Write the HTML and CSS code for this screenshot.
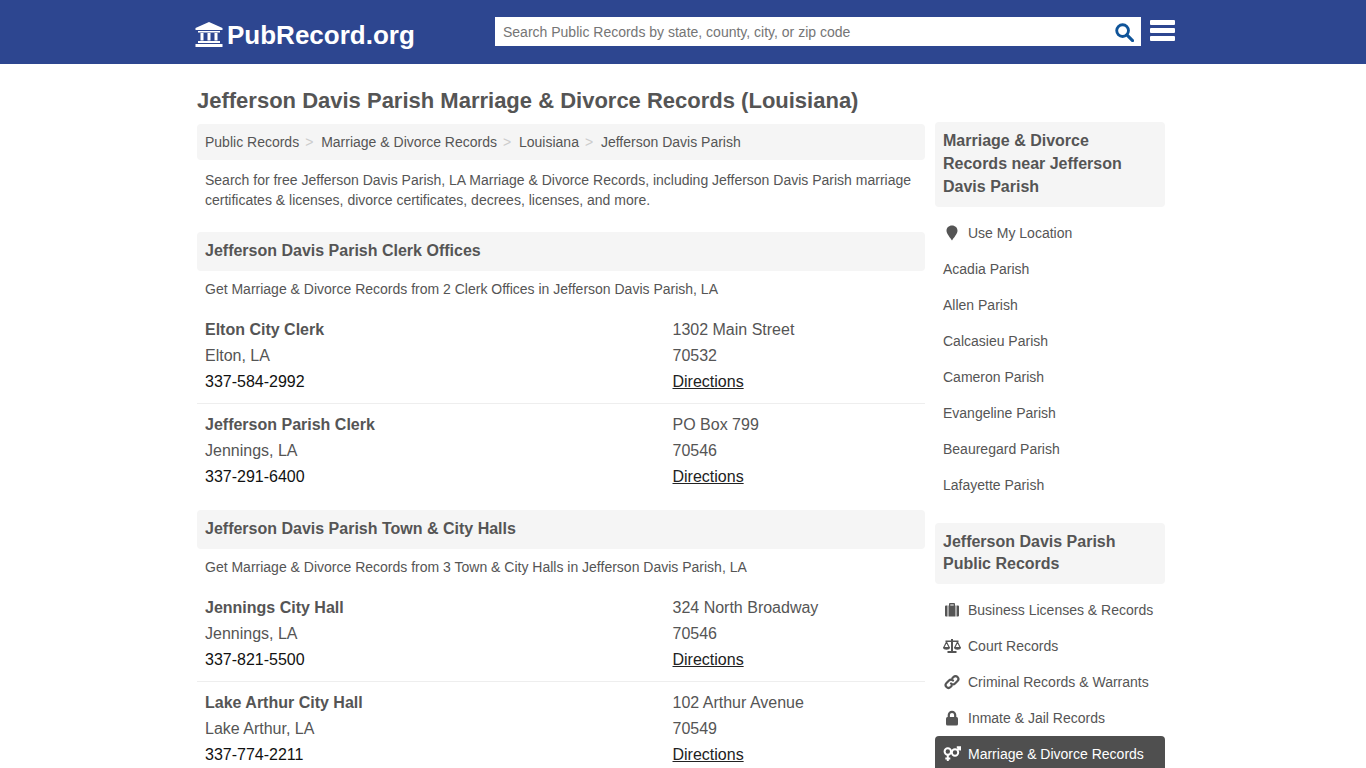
FILE: index.html
```html
<!DOCTYPE html>
<html lang="en">
<head>
<meta charset="utf-8">
<title>Jefferson Davis Parish Marriage &amp; Divorce Records (Louisiana)</title>
<link rel="stylesheet" href="styles.css">
</head>
<body>
<header class="topbar">
  <div class="topbar-inner">
    <a class="logo" href="#">
      <svg class="logo-icon" viewBox="0 0 28 25"><path d="M14 0 L27.500 6 V8 H0.500 V6 Z M3 9 H25 V10.500 H3 Z M5.500 11 H8.500 V18.500 H5.500 Z M12.500 11 H15.500 V18.500 H12.500 Z M19.500 11 H22.500 V18.500 H19.500 Z M3 19 H25 V21 H3 Z M0.500 22 H27.500 V25 H0.500 Z"/></svg>
      <span class="logo-text">PubRecord.org</span>
    </a>
    <form class="search">
      <input class="search-input" type="text" placeholder="Search Public Records by state, county, city, or zip code">
      <svg class="search-icon" viewBox="0 0 20 20"><circle cx="8" cy="8" r="6.200" fill="none" stroke="#0f5499" stroke-width="3"/><path d="M12.500 12.500 L18.500 18.500" stroke="#0f5499" stroke-width="3.200" stroke-linecap="round"/></svg>
    </form>
    <div class="burger"><span></span><span></span><span></span></div>
  </div>
</header>
<div class="page">
  <main class="main">
    <h1 class="title">Jefferson Davis Parish Marriage &amp; Divorce Records (Louisiana)</h1>
    <nav class="crumbs">
      <a href="#">Public Records</a><i>&gt;</i><a href="#">Marriage &amp; Divorce Records</a><i>&gt;</i><a href="#">Louisiana</a><i>&gt;</i><a href="#">Jefferson Davis Parish</a>
    </nav>
    <p class="intro">Search for free Jefferson Davis Parish, LA Marriage &amp; Divorce Records, including Jefferson Davis Parish marriage certificates &amp; licenses, divorce certificates, decrees, licenses, and more.</p>

    <h2 class="section-head">Jefferson Davis Parish Clerk Offices</h2>
    <p class="section-sub">Get Marriage &amp; Divorce Records from 2 Clerk Offices in Jefferson Davis Parish, LA</p>
    <div class="entry">
      <div class="col-l"><b>Elton City Clerk</b><span>Elton, LA</span><span class="phone">337-584-2992</span></div>
      <div class="col-r"><span>1302 Main Street</span><span>70532</span><a href="#">Directions</a></div>
    </div>
    <div class="entry last">
      <div class="col-l"><b>Jefferson Parish Clerk</b><span>Jennings, LA</span><span class="phone">337-291-6400</span></div>
      <div class="col-r"><span>PO Box 799</span><span>70546</span><a href="#">Directions</a></div>
    </div>

    <h2 class="section-head">Jefferson Davis Parish Town &amp; City Halls</h2>
    <p class="section-sub">Get Marriage &amp; Divorce Records from 3 Town &amp; City Halls in Jefferson Davis Parish, LA</p>
    <div class="entry">
      <div class="col-l"><b>Jennings City Hall</b><span>Jennings, LA</span><span class="phone">337-821-5500</span></div>
      <div class="col-r"><span>324 North Broadway</span><span>70546</span><a href="#">Directions</a></div>
    </div>
    <div class="entry">
      <div class="col-l"><b>Lake Arthur City Hall</b><span>Lake Arthur, LA</span><span class="phone">337-774-2211</span></div>
      <div class="col-r"><span>102 Arthur Avenue</span><span>70549</span><a href="#">Directions</a></div>
    </div>
  </main>
  <aside class="side">
    <h3 class="side-head tall">Marriage &amp; Divorce Records near Jefferson Davis Parish</h3>
    <ul class="side-list">
      <li><a href="#"><svg class="ico" viewBox="0 0 18 16"><path d="M9 .5 C5.700 .5 3.500 2.800 3.500 5.800 C3.500 9 7.500 13 9 15.500 C10.500 13 14.500 9 14.500 5.800 C14.500 2.800 12.300 .5 9 .5 Z"/></svg>Use My Location</a></li>
      <li><a href="#">Acadia Parish</a></li>
      <li><a href="#">Allen Parish</a></li>
      <li><a href="#">Calcasieu Parish</a></li>
      <li><a href="#">Cameron Parish</a></li>
      <li><a href="#">Evangeline Parish</a></li>
      <li><a href="#">Beauregard Parish</a></li>
      <li><a href="#">Lafayette Parish</a></li>
    </ul>
    <h3 class="side-head">Jefferson Davis Parish Public Records</h3>
    <ul class="side-list">
      <li><a href="#"><svg class="ico" viewBox="0 0 18 16"><path d="M2 4.500 a1 1 0 0 1 1-1 H4.500 V14.500 H3 a1 1 0 0 1-1-1 Z M5.500 3.500 H6 V2 A1 1 0 0 1 7 1 H11 A1 1 0 0 1 12 2 V3.500 H12.500 V14.500 H5.500 Z M7.300 3.500 H10.700 V2.400 H7.300 Z M13.500 3.500 H15 a1 1 0 0 1 1 1 V13.500 a1 1 0 0 1-1 1 H13.500 Z"/></svg>Business Licenses &amp; Records</a></li>
      <li><a href="#"><svg class="ico" viewBox="0 0 18 16"><path d="M8 1 H10 V13 H13.500 V15 H4.500 V13 H8 Z M2.500 2.500 H15.500 V4 H2.500 Z"/><path d="M3.500 4 L.8 9.500 H6.200 Z M14.500 4 L11.800 9.500 H17.200 Z" stroke="#555" stroke-width="1.200" fill="none"/><path d="M0 9.500 H7 C7 12.500 0 12.500 0 9.500 Z M11 9.500 H18 C18 12.500 11 12.500 11 9.500 Z"/></svg>Court Records</a></li>
      <li><a href="#"><svg class="ico" viewBox="0 0 18 16"><path d="M8 9.500 a2.800 2.800 0 0 0 4 0 L14.500 7 a2.800 2.800 0 0 0-4-4 L9.500 4 M10 6.500 a2.800 2.800 0 0 0-4 0 L3.500 9 a2.800 2.800 0 0 0 4 4 L8.500 12" fill="none" stroke="#555" stroke-width="2.200" stroke-linecap="round"/></svg>Criminal Records &amp; Warrants</a></li>
      <li><a href="#"><svg class="ico" viewBox="0 0 18 16"><path d="M5.800 8 V5 a3.200 3.200 0 0 1 6.400 0 V8" fill="none" stroke="#555" stroke-width="2.200"/><rect x="3" y="7" width="12" height="8.500" rx="1.500"/></svg>Inmate &amp; Jail Records</a></li>
      <li class="active"><a href="#"><svg class="ico" viewBox="0 0 18 16"><g fill="none" stroke="#fff" stroke-width="2"><circle cx="4.800" cy="5.500" r="3.200"/><circle cx="12" cy="6.500" r="3.200"/><path d="M4.800 9 V15 M2.300 12.500 H7.300 M14.200 4.300 L17 1.300 M13.800 1.200 H17.200 V4.600"/></g></svg>Marriage &amp; Divorce Records</a></li>
    </ul>
  </aside>
</div>
</body>
</html>
```
FILE: styles.css
```css
* { box-sizing: border-box; }
html, body { margin: 0; padding: 0; height: 768px; overflow: hidden; }
body { font-family: "Liberation Sans", Arial, sans-serif; color: #555; background: #fff; font-size: 14px; }
a { color: inherit; text-decoration: none; }

.topbar { height: 64px; background: #2d4690; }
.topbar-inner { width: 980px; margin: 0 auto 0 195px; display: flex; align-items: flex-start; }
.logo { display: flex; align-items: center; width: 300px; height: 64px; color: #fff; }
.logo-icon { width: 28px; height: 25px; fill: #fff; margin-top: 4px; flex: none; }
.logo-text { font-size: 26px; font-weight: 700; margin-left: 4px; margin-top: 6px; white-space: nowrap; }
.search { position: relative; width: 646px; height: 29px; margin-top: 17px; background: #fff; }
.search-input { width: 100%; height: 100%; border: 0; padding: 0 40px 0 8px; font: 14px "Liberation Sans", Arial, sans-serif; background: transparent; }
.search-input::placeholder { color: #757575; opacity: 1; }
.search-icon { position: absolute; right: 7px; top: 6px; width: 19px; height: 19px; }
.burger { margin: 20px 0 0 9px; width: 25px; display: flex; flex-direction: column; gap: 3.500px; }
.burger span { display: block; height: 4.500px; background: #fff; border-radius: 1px; }

.page { margin-left: 197px; width: 968px; display: flex; align-items: flex-start; gap: 10px; }
.main { width: 728px; flex: none; }
.side { width: 230px; flex: none; padding-top: 58px; }

.title { margin: 0; padding-top: 24px; height: 60px; font-size: 22px; line-height: 26px; font-weight: 700; white-space: nowrap; }
.crumbs { height: 36px; background: #f5f5f5; border-radius: 4px; padding: 0 8px; display: flex; align-items: center; white-space: nowrap; }
.crumbs i { font-style: normal; color: #ccc; padding: 0 0 0 6px; width: 22px; }
.intro { margin: 0; padding: 10px 8px 0; line-height: 20px; height: 72px; }

.section-head { margin: 0; height: 39px; line-height: 37px; background: #f5f5f5; border-radius: 4px; padding: 0 8px; font-size: 16px; font-weight: 700; }
.section-sub { margin: 0; padding: 0 8px; height: 46px; line-height: 37px; }

.entry { display: flex; height: 87px; padding: 0 8px; border-bottom: 1px solid #eee; font-size: 16px; line-height: 26px; }
.entry + .entry { height: 95px; padding-top: 8px; }
.entry.last { border-bottom: 0; height: 86px; margin-bottom: 20px; }
.col-l { width: 467.500px; flex: none; display: flex; flex-direction: column; }
.col-r { display: flex; flex-direction: column; }
.col-r a { color: #222; text-decoration: underline; align-self: flex-start; }
.phone { color: #111; }

.side-head { margin: 0; background: #f5f5f5; border-radius: 4px; padding: 8px 8px 9px; font-size: 16px; line-height: 22px; font-weight: 700; }
.side-head.tall { padding: 7px 8px 9px; line-height: 23px; }
.side-list { list-style: none; margin: 0 0 20px; padding: 8px 0 0; }
.side-list li { height: 36px; }
.side-list a { display: flex; align-items: center; height: 36px; padding: 0 8px; white-space: nowrap; }
.ico { width: 18px; height: 16px; margin: 0 7px 0 0; fill: #555; flex: none; }
.side-list .active { background: #4f4f4f; border-radius: 4px 4px 0 0; color: #fff; }
.side-list .active .ico { fill: #fff; }
```
